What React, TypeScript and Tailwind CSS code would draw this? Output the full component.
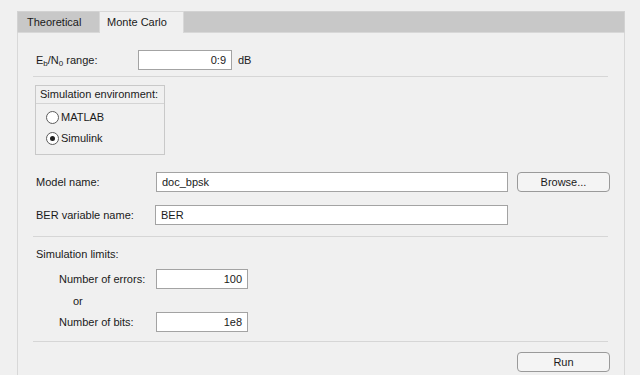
const font = { fontFamily: '"Liberation Sans", Arial, sans-serif' }

const Field = ({ value, width, align = "right" }: { value: string; width: string; align?: "left" | "right" }) => (
    <div className={`${width} h-[20px] bg-white border border-[#a3a3a3] flex items-center px-[5px] ${align === "right" ? "justify-end" : "justify-start"}`}>
        {value}
    </div>
)

const Radio = ({ label, checked }: { label: string; checked?: boolean }) => (
    <div className="flex items-center h-[20px]">
        <div className="w-[13px] h-[13px] rounded-full border border-[#5c5c5c] bg-white flex items-center justify-center">
            {checked && <div className="w-[5px] h-[5px] rounded-full bg-[#1f1f1f]" />}
        </div>
        <span className="ml-[2px]">{label}</span>
    </div>
)

const Separator = () => <div className="-ml-[3px] w-[575px] h-px bg-[#d6d6d6]" />

const Button = ({ label }: { label: string }) => (
    <button className="w-[93px] h-[20px] rounded-[4px] border border-[#9a9a9a] bg-[#f4f4f4] flex items-center justify-center text-[11px] text-[#1a1a1a]">
        {label}
    </button>
)

const App = () => {
    return (
        <div className="w-[640px] h-[375px] bg-[#f0f0f0] overflow-hidden pt-[11px] pl-[17px] text-[11px] text-[#1a1a1a]" style={font}>
            <div className="w-[608px] h-[400px] flex flex-col">
                {/* tab strip */}
                <div className="h-[22px] bg-[#c8c8c8] border-t border-l border-r border-[#d2d2d2] border-b border-b-[#d8d8d8] flex">
                    <div className="w-[81px] h-full flex items-center pl-[9px]">Theoretical</div>
                    <div className="w-[85px] h-[22px] -mt-px bg-[#f0f0f0] border-t border-l border-r border-[#d8d8d8] flex items-center pl-[7px]">Monte Carlo</div>
                </div>

                {/* panel */}
                <div className="flex-1 border-l border-r border-[#d8d8d8] pl-[18px] flex flex-col">
                    <div className="mt-[17px] h-[20px] flex items-center">
                        <div className="w-[102px]">
                            E<sub className="text-[8px]">b</sub>/N<sub className="text-[8px]">0</sub> range:
                        </div>
                        <Field value="0:9" width="w-[94px]" />
                        <span className="ml-[6px]">dB</span>
                    </div>

                    <div className="mt-[6px]"><Separator /></div>

                    <div className="mt-[8px] -ml-px w-[130px] h-[70px] border border-[#c9c9c9] flex flex-col">
                        <div className="h-[18px] border-b border-[#d4d4d4] flex items-center pl-[4px]">Simulation environment:</div>
                        <div className="pl-[10px] pt-[3px] flex flex-col">
                            <Radio label="MATLAB" />
                            <div className="mt-px"><Radio label="Simulink" checked /></div>
                        </div>
                    </div>

                    <div className="mt-[17px] h-[20px] flex items-center">
                        <div className="w-[120px]">Model name:</div>
                        <Field value="doc_bpsk" width="w-[352px]" align="left" />
                        <div className="ml-[9px]"><Button label="Browse..." /></div>
                    </div>

                    <div className="mt-[13px] h-[20px] flex items-center">
                        <div className="w-[119px]">BER variable name:</div>
                        <Field value="BER" width="w-[353px]" align="left" />
                    </div>

                    <div className="mt-[11px]"><Separator /></div>

                    <div className="mt-[10px] h-[14px] flex items-center">Simulation limits:</div>

                    <div className="mt-[8px] h-[20px] flex items-center pl-[23px]">
                        <div className="w-[97px]">Number of errors:</div>
                        <Field value="100" width="w-[92px]" />
                    </div>

                    <div className="mt-[5px] h-[14px] flex items-center pl-[37px]">or</div>

                    <div className="mt-[4px] h-[20px] flex items-center pl-[23px]">
                        <div className="w-[97px]">Number of bits:</div>
                        <Field value="1e8" width="w-[92px]" />
                    </div>

                    <div className="mt-[9px]"><Separator /></div>

                    <div className="mt-[10px] ml-[481px]"><Button label="Run" /></div>
                </div>
            </div>
        </div>
    )
}

export default App
